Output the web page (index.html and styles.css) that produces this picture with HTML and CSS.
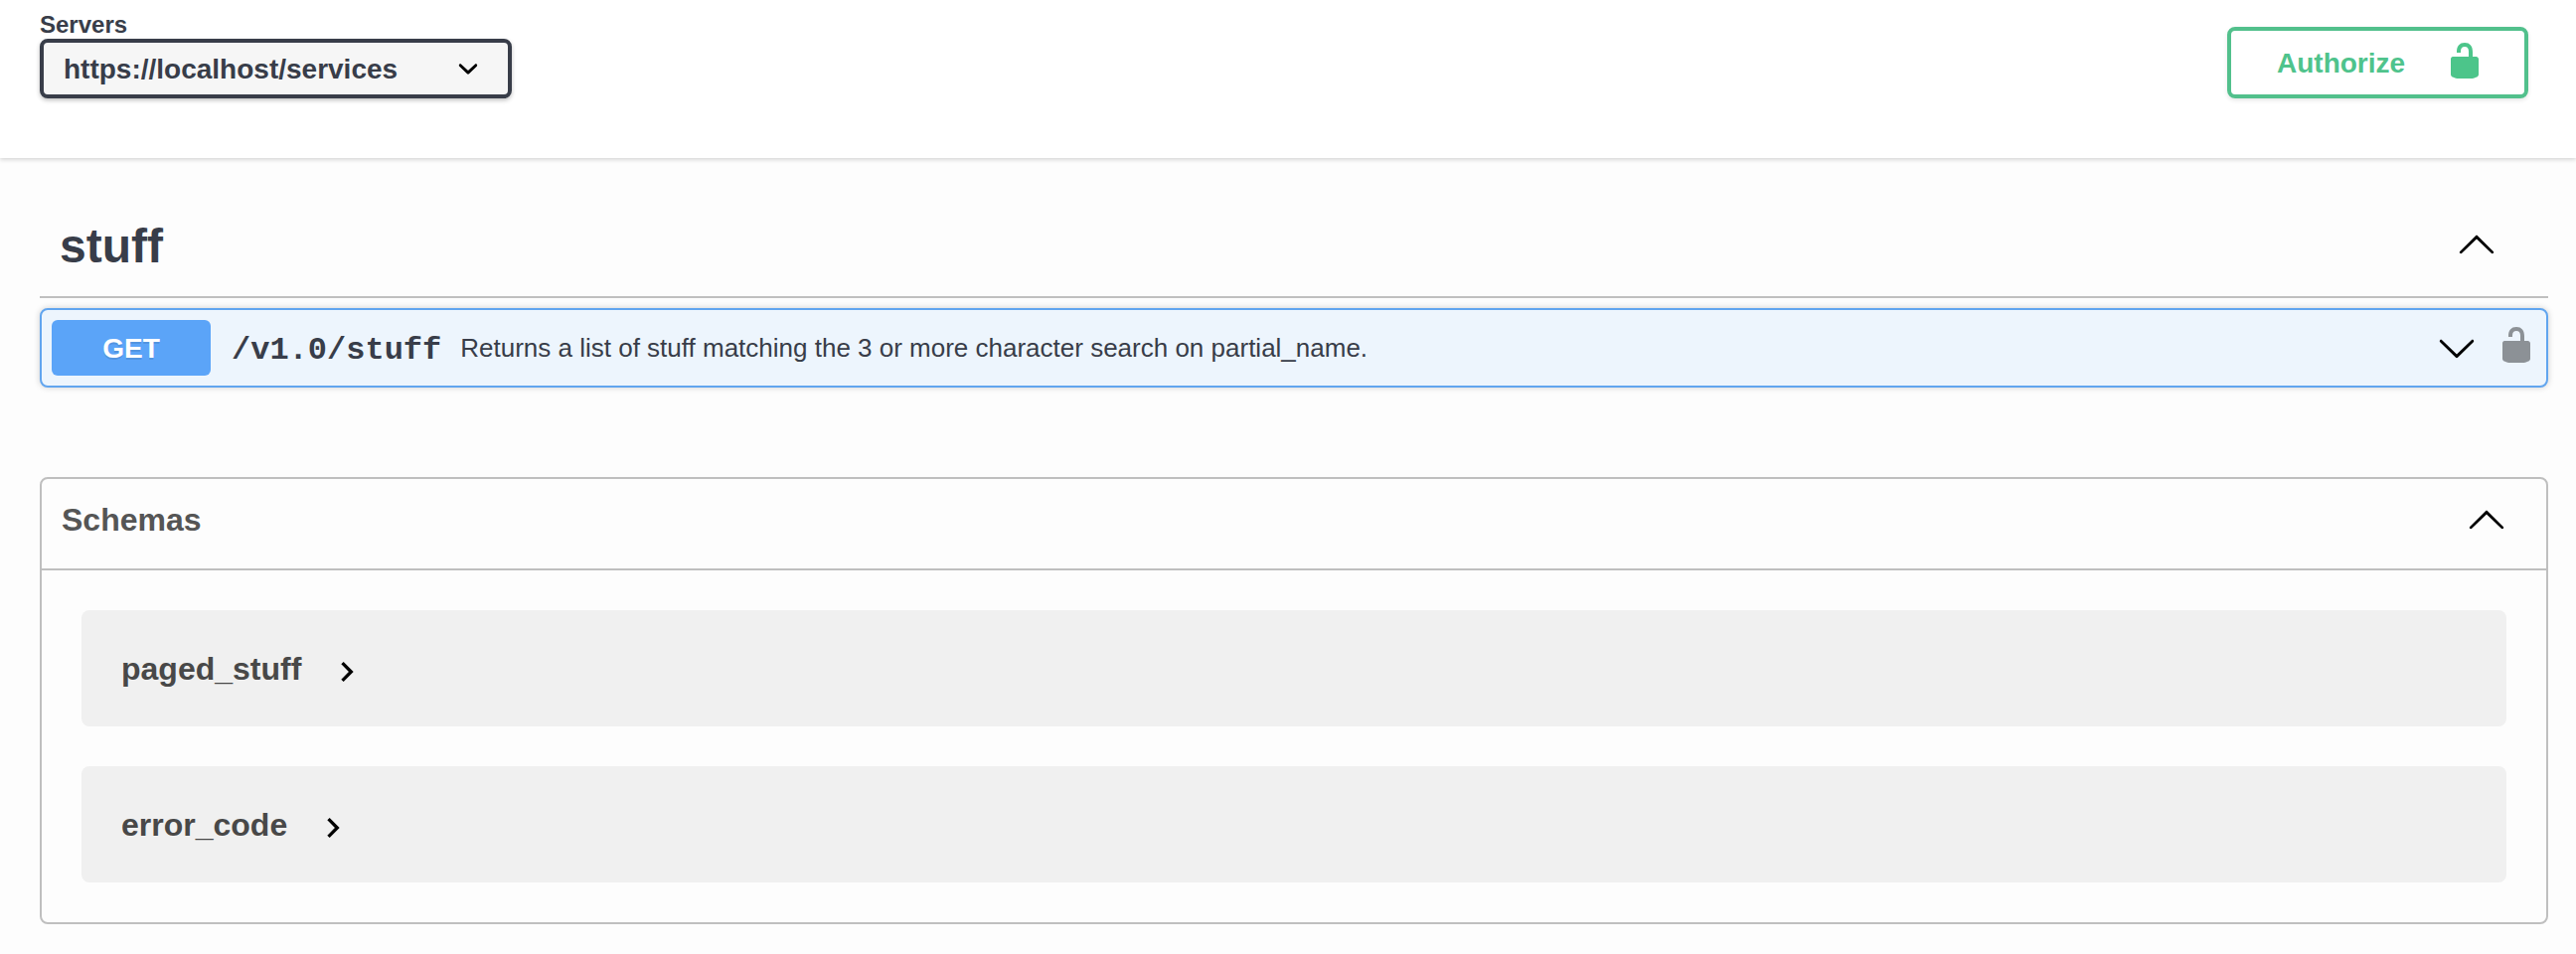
FILE: index.html
```html
<!DOCTYPE html>
<html lang="en">
<head>
<meta charset="utf-8">
<title>API services</title>
<link rel="stylesheet" href="styles.css">
</head>
<body>
<svg class="defs" aria-hidden="true">
  <symbol id="unlocked" viewBox="0 0 20 20"><path d="M15.8 8H14V5.6C14 2.703 12.665 1 10 1 7.334 1 6 2.703 6 5.6V6h2v-.801C8 3.754 8.797 3 10 3c1.203 0 2 .754 2 2.199V8H4c-.553 0-1 .646-1 1.199V17c0 .549.428 1.139.951 1.307l1.197.387C5.672 18.861 6.55 19 7.1 19h5.8c.549 0 1.428-.139 1.951-.307l1.196-.387c.524-.167.953-.757.953-1.306V9.199C17 8.646 16.352 8 15.8 8z"/></symbol>
  <symbol id="arrow-up" viewBox="0 0 20 20"><path d="M17.418 14.908c.272.268.709.268.979 0s.271-.701 0-.969l-7.908-7.83c-.27-.268-.707-.268-.979 0l-7.908 7.83c-.27.268-.27.701 0 .969.271.268.709.268.979 0L10 7.767l7.418 7.141z"/></symbol>
  <symbol id="arrow-down" viewBox="0 0 20 20"><path d="M17.418 6.109c.272-.268.709-.268.979 0s.271.701 0 .969l-7.908 7.83c-.27.268-.707.268-.979 0l-7.908-7.83c-.27-.268-.27-.701 0-.969.271-.268.709-.268.979 0L10 13.25l7.418-7.141z"/></symbol>
  <symbol id="select-arrow" viewBox="0 0 20 20"><path d="M13.418 7.859c.271-.268.709-.268.978 0s.272.701 0 .969l-3.908 3.83c-.27.268-.707.268-.979 0l-3.908-3.83c-.27-.267-.27-.701 0-.969.271-.268.709-.268.978 0L10 11l3.418-3.141z"/></symbol>
  <symbol id="toggle" viewBox="0 0 24 24"><path d="M10 6L8.59 7.41 13.17 12l-4.58 4.59L10 18l6-6z"/></symbol>
</svg>
<header class="scheme">
  <div class="servers">
    <span class="servers-label">Servers</span>
    <div class="select"><span class="select-text">https://localhost/services</span><svg class="icon"><use href="#select-arrow"/></svg></div>
  </div>
  <button class="authorize"><span class="authorize-text">Authorize</span><svg class="icon"><use href="#unlocked"/></svg></button>
</header>
<main class="content">
  <section class="tag">
    <h3 class="tag-title">stuff</h3>
    <svg class="icon tag-arrow"><use href="#arrow-up"/></svg>
  </section>
  <section class="operation">
    <span class="method">GET</span>
    <span class="path">/v1.0/stuff</span>
    <span class="summary">Returns a list of stuff matching the 3 or more character search on partial_name.</span>
    <svg class="icon op-arrow"><use href="#arrow-down"/></svg>
    <svg class="icon op-lock"><use href="#unlocked"/></svg>
  </section>
  <section class="models">
    <div class="models-head">
      <h4 class="models-title">Schemas</h4>
      <svg class="icon"><use href="#arrow-up"/></svg>
    </div>
    <div class="models-list">
      <div class="model"><span class="model-name">paged_stuff</span><svg class="icon"><use href="#toggle"/></svg></div>
      <div class="model"><span class="model-name">error_code</span><svg class="icon"><use href="#toggle"/></svg></div>
    </div>
  </section>
</main>
</body>
</html>
```
FILE: styles.css
```css
* { box-sizing: border-box; }
body {
  margin: 0;
  height: 960px;
  overflow: hidden;
  background: #fdfdfd;
  color: #383d49;
  font-family: "Liberation Sans", Arial, sans-serif;
}
.defs { display: none; }
.icon { display: block; width: 40px; height: 40px; flex: none; }
.scheme {
  display: flex;
  justify-content: space-between;
  align-items: flex-start;
  height: 159px;
  padding: 11px 48px 0 40px;
  background: #fff;
  box-shadow: 0 2px 4px rgba(0, 0, 0, .15);
}
.servers-label { display: block; height: 28px; font-size: 24px; line-height: 28px; font-weight: 700; }
.select {
  display: flex;
  align-items: center;
  justify-content: space-between;
  width: 475px;
  height: 60px;
  padding: 0 20px 0 20px;
  border: 4px solid #383d49;
  border-radius: 8px;
  background: #f6f6f6;
  box-shadow: 0 2px 4px rgba(0, 0, 0, .25);
  font-size: 28px;
  font-weight: 700;
}
.select-text { padding-top: 1px; }
.authorize {
  display: flex;
  align-items: flex-start;
  justify-content: space-between;
  width: 303px;
  height: 72px;
  margin: 16px 0 0;
  padding: 10px 40px 0 46px;
  border: 4px solid #52c08c;
  border-radius: 8px;
  background: transparent;
  box-shadow: 0 2px 4px rgba(0, 0, 0, .1);
  color: #4fc38c;
  font: 700 28px/46px "Liberation Sans", Arial, sans-serif;
}
.authorize .icon { fill: #4cc58a; }
.content { padding: 40px 28px 0 40px; }
.tag {
  display: flex;
  align-items: center;
  justify-content: space-between;
  height: 101px;
  padding: 0 52px 8px 20px;
  border-bottom: 2px solid #bfbfbf;
}
.tag-title { margin: 0; padding-top: 7px; font-size: 48px; line-height: 56px; }
.operation {
  display: flex;
  align-items: center;
  height: 80px;
  margin-top: 10px;
  padding: 0 10px;
  border: 2px solid #61a5ef;
  border-radius: 8px;
  background: #edf5fd;
  box-shadow: 0 0 6px rgba(0, 0, 0, .19);
}
.method {
  width: 160px;
  height: 56px;
  border-radius: 6px;
  background: #5ba4f8;
  color: #fff;
  font-size: 28px;
  line-height: 57px;
  font-weight: 700;
  text-align: center;
  text-shadow: 0 2px 0 rgba(0, 0, 0, .1);
}
.path { margin-left: 21px; padding-top: 5px; font: 700 32px/40px "Liberation Mono", "Courier New", monospace; }
.summary { margin-left: 19px; font-size: 26px; line-height: 32px; }
.op-arrow { margin-left: auto; }
.op-lock { margin: -6px 0 0 20px; fill: #8c9196; }
.models { height: 450px; margin-top: 90px; border: 2px solid #bfbfbf; border-radius: 8px; }
.models-head {
  display: flex;
  align-items: center;
  justify-content: space-between;
  height: 92px;
  padding: 0 40px 10px 20px;
  border-bottom: 2px solid #bfbfbf;
}
.models-title { margin: 0; padding-top: 1px; color: #555; font-size: 32px; line-height: 38px; }
.models-list { display: flex; flex-direction: column; gap: 40px; padding: 40px; }
.model {
  display: flex;
  align-items: center;
  gap: 26px;
  height: 117px;
  padding-left: 40px;
  border-radius: 8px;
  background: #f0f0f0;
  color: #484848;
  font-size: 32px;
  font-weight: 700;
}
.model-name { padding-top: 2px; }
.model .icon { margin-top: 6px; }
```
